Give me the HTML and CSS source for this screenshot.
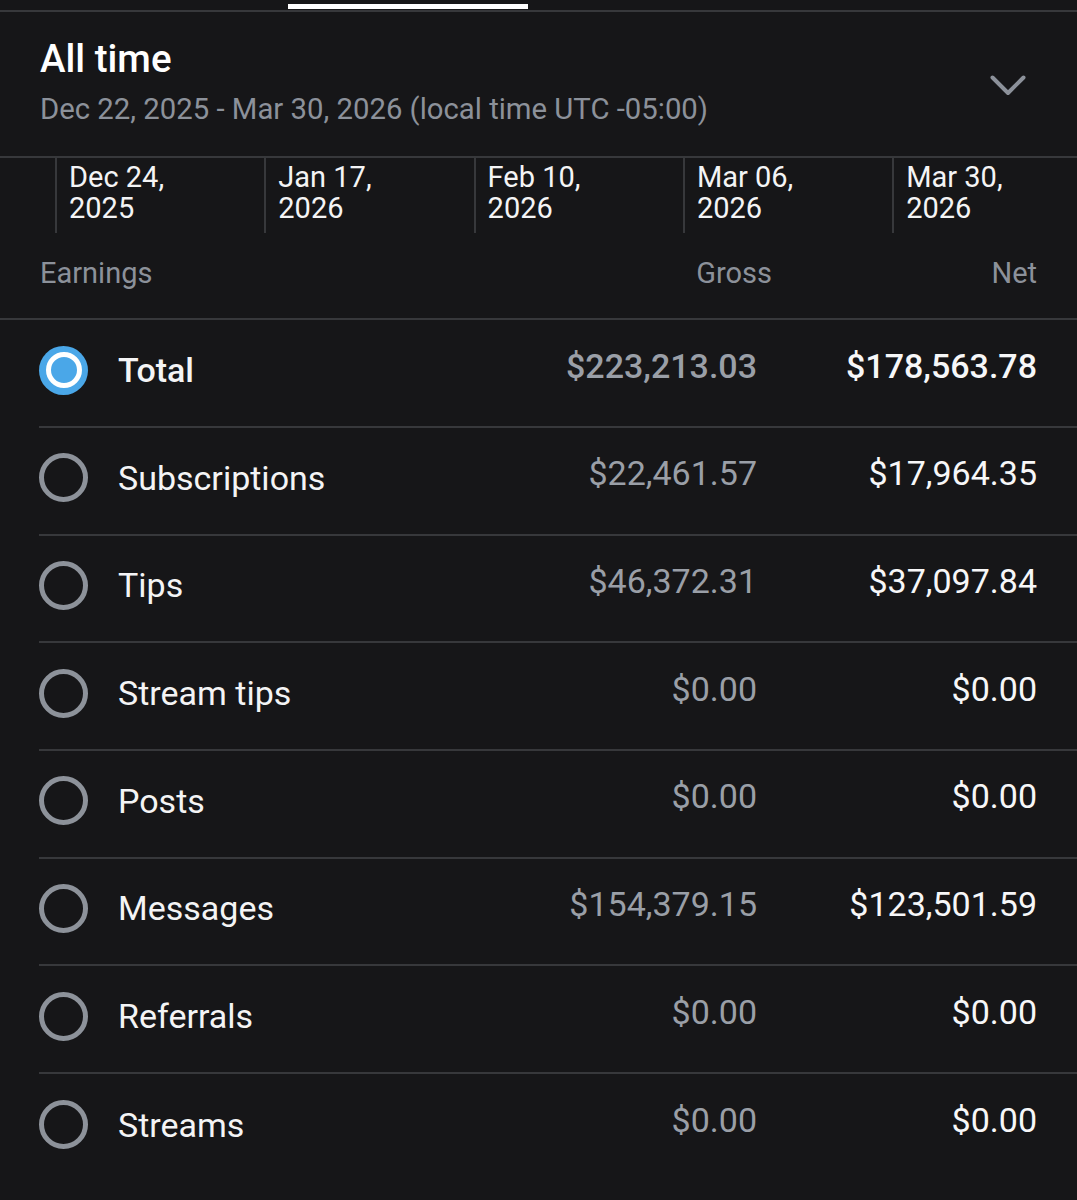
FILE: index.html
```html
<!DOCTYPE html>
<html lang="en">
<head>
<meta charset="utf-8">
<title>Earnings</title>
<link rel="stylesheet" href="styles.css">
</head>
<body>
<div class="tabs"><div class="tab-indicator"></div></div>

<header class="period">
  <div class="period-text">
    <h1 class="period-title">All time</h1>
    <div class="period-range">Dec 22, 2025 - Mar 30, 2026 (local time UTC -05:00)</div>
  </div>
  <svg class="chevron" width="36" height="22" viewBox="0 0 36 22" aria-hidden="true">
    <polyline points="2.5,2.5 18,18 33.5,2.5" fill="none" stroke="#8c919a" stroke-width="4" stroke-linecap="round" stroke-linejoin="round"/>
  </svg>
</header>

<div class="axis">
  <div class="tick">Dec 24,<br>2025</div>
  <div class="tick">Jan 17,<br>2026</div>
  <div class="tick">Feb 10,<br>2026</div>
  <div class="tick">Mar 06,<br>2026</div>
  <div class="tick">Mar 30,<br>2026</div>
</div>

<div class="table-head">
  <span>Earnings</span>
  <span class="th-gross">Gross</span>
  <span class="th-net">Net</span>
</div>

<div class="rows">
  <div class="row selected">
    <span class="radio"></span>
    <span class="label">Total</span>
    <span class="gross">$223,213.03</span>
    <span class="net">$178,563.78</span>
  </div>
  <div class="row">
    <span class="radio"></span>
    <span class="label">Subscriptions</span>
    <span class="gross">$22,461.57</span>
    <span class="net">$17,964.35</span>
  </div>
  <div class="row">
    <span class="radio"></span>
    <span class="label">Tips</span>
    <span class="gross">$46,372.31</span>
    <span class="net">$37,097.84</span>
  </div>
  <div class="row">
    <span class="radio"></span>
    <span class="label">Stream tips</span>
    <span class="gross">$0.00</span>
    <span class="net">$0.00</span>
  </div>
  <div class="row">
    <span class="radio"></span>
    <span class="label">Posts</span>
    <span class="gross">$0.00</span>
    <span class="net">$0.00</span>
  </div>
  <div class="row">
    <span class="radio"></span>
    <span class="label">Messages</span>
    <span class="gross">$154,379.15</span>
    <span class="net">$123,501.59</span>
  </div>
  <div class="row">
    <span class="radio"></span>
    <span class="label">Referrals</span>
    <span class="gross">$0.00</span>
    <span class="net">$0.00</span>
  </div>
  <div class="row">
    <span class="radio"></span>
    <span class="label">Streams</span>
    <span class="gross">$0.00</span>
    <span class="net">$0.00</span>
  </div>
</div>
</body>
</html>
```

FILE: styles.css
```css
* { box-sizing: border-box; }

html, body {
  margin: 0;
  background: #161618;
  color: #f4f4f5;
  font-family: Roboto, "Noto Sans", "Liberation Sans", sans-serif;
  overflow: hidden;
}

.tabs {
  display: flex;
  padding-top: 4px;
  padding-left: 288px;
  border-bottom: 2px solid #37383b;
}

.tab-indicator {
  width: 240px;
  height: 5px;
  margin-bottom: 1px;
  background: #ffffff;
}

.period {
  display: flex;
  align-items: center;
  justify-content: space-between;
  padding: 25px 51px 30px 40px;
  border-bottom: 2px solid #37383b;
}

.period-title {
  margin: 0;
  font-size: 38.5px;
  line-height: 44px;
  font-weight: 500;
  color: #ffffff;
}

.period-range {
  margin-top: 11px;
  font-size: 29.3px;
  line-height: 34px;
  color: #8c919a;
}

.chevron {
  display: block;
  margin-top: 8px;
}

.axis {
  display: flex;
  padding-left: 55px;
  overflow: hidden;
  white-space: nowrap;
}

.tick {
  flex: 0 0 209.3px;
  border-left: 2px solid #37383b;
  padding: 4px 0 9px 12px;
  font-size: 29px;
  line-height: 31px;
  color: #f4f4f5;
}

.table-head {
  display: grid;
  grid-template-columns: 1fr auto 265px;
  padding: 23px 40px 28px 40px;
  font-size: 29px;
  line-height: 34px;
  color: #8c919a;
  border-bottom: 2px solid #37383b;
}

.th-net { text-align: right; }

.rows {
  margin-left: 39px;
}

.row {
  display: grid;
  grid-template-columns: 49px 1fr auto 280px;
  align-items: center;
  height: 107.67px;
  padding: 0 40px 6px 0;
  border-bottom: 2px solid #37383b;
  font-size: 34px;
  line-height: 40px;
}

.row:first-child { height: 108px; }
.row:last-child { border-bottom: none; }

.radio {
  width: 49px;
  height: 49px;
  border-radius: 50%;
  border: 5px solid #8d929a;
}

.row.selected .radio {
  position: relative;
  border: none;
  background: #4aa7e8;
}

.row.selected .radio::after {
  content: "";
  position: absolute;
  inset: 6.5px;
  border-radius: 50%;
  border: 5px solid #ffffff;
  background: #4aa7e8;
}

.label {
  margin-left: 30px;
  color: #f4f4f5;
}

.gross {
  text-align: right;
  color: #9a9fa7;
  padding-bottom: 9px;
}

.net {
  text-align: right;
  color: #f7f7f8;
  padding-bottom: 9px;
}

.row.selected .label,
.row.selected .gross,
.row.selected .net {
  font-weight: 500;
}
```
